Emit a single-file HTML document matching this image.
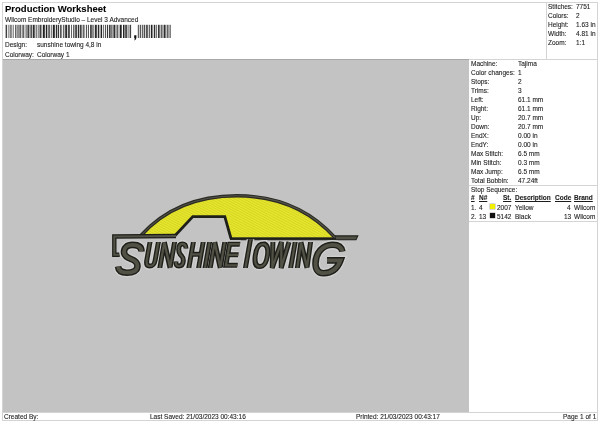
<!DOCTYPE html>
<html><head><meta charset="utf-8"><style>
html,body{margin:0;padding:0;background:#fff;width:600px;height:424px;overflow:hidden;position:relative}
.t{position:absolute;will-change:transform;font-family:"Liberation Sans",sans-serif;font-size:6.5px;color:#1c1c1c;-webkit-text-stroke:0.1px #1c1c1c;white-space:pre;line-height:normal}
.ln{position:absolute;background:#d4d4d4}
</style></head><body>
<div class="ln" style="left:2px;top:2px;width:596px;height:1px"></div>
<div class="ln" style="left:2px;top:2px;width:1px;height:419px"></div>
<div class="ln" style="left:597px;top:2px;width:1px;height:419px"></div>
<div class="ln" style="left:2px;top:420px;width:596px;height:1px"></div>
<div class="ln" style="left:546px;top:2px;width:1px;height:57px"></div>
<div class="ln" style="left:2px;top:59px;width:596px;height:1px"></div>
<div style="position:absolute;left:3px;top:59px;width:466px;height:353px;background:#c3c3c3"></div>
<div style="position:absolute;left:3px;top:59px;width:466px;height:1px;background:#a8a8a8"></div>
<div class="ln" style="left:469px;top:185px;width:129px;height:1px"></div>
<div class="ln" style="left:469px;top:221px;width:129px;height:1px"></div>
<div class="ln" style="left:2px;top:412px;width:596px;height:1px"></div>
<svg style="position:absolute;left:0;top:0" width="600" height="424" viewBox="0 0 600 424">
<g fill="#222"><rect x="5.6" y="24.8" width="1.5" height="13.2" fill-opacity="0.85"/><rect x="8.4" y="24.8" width="1" height="13.2" fill-opacity="0.7"/><rect x="10.2" y="24.8" width="1.5" height="13.2" fill-opacity="0.7"/><rect x="12.7" y="24.8" width="1" height="13.2" fill-opacity="0.7"/><rect x="15.0" y="24.8" width="1.5" height="13.2" fill-opacity="0.7"/><rect x="17.5" y="24.8" width="1" height="13.2" fill-opacity="1.0"/><rect x="19.3" y="24.8" width="2" height="13.2" fill-opacity="0.7"/><rect x="22.3" y="24.8" width="2" height="13.2" fill-opacity="0.7"/><rect x="25.6" y="24.8" width="1" height="13.2" fill-opacity="0.85"/><rect x="27.4" y="24.8" width="2" height="13.2" fill-opacity="0.85"/><rect x="30.4" y="24.8" width="1.5" height="13.2" fill-opacity="0.85"/><rect x="32.7" y="24.8" width="2" height="13.2" fill-opacity="0.95"/><rect x="35.7" y="24.8" width="1" height="13.2" fill-opacity="0.85"/><rect x="37.7" y="24.8" width="1" height="13.2" fill-opacity="0.7"/><rect x="39.5" y="24.8" width="2" height="13.2" fill-opacity="0.85"/><rect x="42.8" y="24.8" width="2" height="13.2" fill-opacity="1.0"/><rect x="45.8" y="24.8" width="1.5" height="13.2" fill-opacity="1.0"/><rect x="48.3" y="24.8" width="1.5" height="13.2" fill-opacity="0.85"/><rect x="50.8" y="24.8" width="1" height="13.2" fill-opacity="0.7"/><rect x="52.8" y="24.8" width="2" height="13.2" fill-opacity="1.0"/><rect x="55.8" y="24.8" width="1.5" height="13.2" fill-opacity="0.95"/><rect x="58.1" y="24.8" width="1" height="13.2" fill-opacity="1.0"/><rect x="60.1" y="24.8" width="1.5" height="13.2" fill-opacity="0.85"/><rect x="62.9" y="24.8" width="1.5" height="13.2" fill-opacity="0.7"/><rect x="65.2" y="24.8" width="2" height="13.2" fill-opacity="0.95"/><rect x="68.2" y="24.8" width="1.5" height="13.2" fill-opacity="1.0"/><rect x="71.0" y="24.8" width="1" height="13.2" fill-opacity="0.7"/><rect x="73.0" y="24.8" width="1.5" height="13.2" fill-opacity="0.7"/><rect x="75.3" y="24.8" width="1.5" height="13.2" fill-opacity="1.0"/><rect x="77.8" y="24.8" width="1.5" height="13.2" fill-opacity="0.95"/><rect x="80.1" y="24.8" width="1.5" height="13.2" fill-opacity="0.95"/><rect x="82.6" y="24.8" width="2" height="13.2" fill-opacity="0.7"/><rect x="85.9" y="24.8" width="1" height="13.2" fill-opacity="0.85"/><rect x="87.9" y="24.8" width="1" height="13.2" fill-opacity="0.85"/><rect x="90.2" y="24.8" width="1.5" height="13.2" fill-opacity="1.0"/><rect x="92.5" y="24.8" width="1" height="13.2" fill-opacity="1.0"/><rect x="94.8" y="24.8" width="2" height="13.2" fill-opacity="0.95"/><rect x="97.8" y="24.8" width="1.5" height="13.2" fill-opacity="0.95"/><rect x="100.6" y="24.8" width="1.5" height="13.2" fill-opacity="1.0"/><rect x="103.1" y="24.8" width="1" height="13.2" fill-opacity="0.7"/><rect x="105.1" y="24.8" width="1" height="13.2" fill-opacity="0.85"/><rect x="107.1" y="24.8" width="1" height="13.2" fill-opacity="1.0"/><rect x="109.1" y="24.8" width="1.5" height="13.2" fill-opacity="0.95"/><rect x="111.4" y="24.8" width="1" height="13.2" fill-opacity="1.0"/><rect x="113.4" y="24.8" width="2" height="13.2" fill-opacity="0.95"/><rect x="116.4" y="24.8" width="2" height="13.2" fill-opacity="0.7"/><rect x="119.7" y="24.8" width="2" height="13.2" fill-opacity="1.0"/><rect x="123.0" y="24.8" width="1.5" height="13.2" fill-opacity="1.0"/><rect x="125.3" y="24.8" width="1.5" height="13.2" fill-opacity="1.0"/><rect x="127.6" y="24.8" width="1" height="13.2" fill-opacity="0.7"/><rect x="129.6" y="24.8" width="1.5" height="13.2" fill-opacity="0.85"/><rect x="137.8" y="24.8" width="1.5" height="13.2" fill-opacity="0.7"/><rect x="140.1" y="24.8" width="1" height="13.2" fill-opacity="0.85"/><rect x="141.9" y="24.8" width="1.5" height="13.2" fill-opacity="0.7"/><rect x="144.2" y="24.8" width="1" height="13.2" fill-opacity="1.0"/><rect x="146.2" y="24.8" width="1.5" height="13.2" fill-opacity="0.95"/><rect x="148.7" y="24.8" width="1.5" height="13.2" fill-opacity="0.7"/><rect x="151.0" y="24.8" width="1.5" height="13.2" fill-opacity="1.0"/><rect x="153.8" y="24.8" width="1.5" height="13.2" fill-opacity="0.95"/><rect x="156.1" y="24.8" width="1" height="13.2" fill-opacity="0.7"/><rect x="158.1" y="24.8" width="1.5" height="13.2" fill-opacity="1.0"/><rect x="160.6" y="24.8" width="2" height="13.2" fill-opacity="0.7"/><rect x="163.6" y="24.8" width="2" height="13.2" fill-opacity="0.95"/><rect x="166.6" y="24.8" width="2" height="13.2" fill-opacity="0.7"/><rect x="169.6" y="24.8" width="1" height="13.2" fill-opacity="0.95"/></g>
<path d="M134.2,35.2 h2.2 v2.4 q0,2.2 -1.8,2.8 l-0.4,-0.7 q0.9,-0.5 1,-1.3 h-1z" fill="#111"/>
<g id="logo"><path d="M230.6,235.9 L357.8,235.9 L356,239.8 L230.6,239.8 Z" fill="#525145" stroke="#1f1f1a" stroke-width="1.1"/><defs><pattern id="st" width="2.2" height="2.2" patternUnits="userSpaceOnUse" patternTransform="rotate(28)"><rect width="2.2" height="2.2" fill="#e6e62e"/><rect y="1.3" width="2.2" height="0.9" fill="#d4d422"/></pattern></defs><path d="M140.5,236 C167,206.5 201,195.8 237,195.8 C273,195.8 307,206.5 335,237.6 L231,237.6 L224.8,216.6 L192.8,216.6 L174.7,235.5 Z" fill="url(#st)"/><path d="M231,238.6 L336,238.6" stroke="#1f1f1a" stroke-width="2"/><path d="M140.5,236 C167,206.5 201,195.8 237,195.8 C273,195.8 307,206.5 335,237.6" fill="none" stroke="#2a2a24" stroke-width="3.5"/><path d="M140.5,236 C167,206.5 201,195.8 237,195.8 C273,195.8 307,206.5 335,237.6" fill="none" stroke="#55544a" stroke-width="1.1"/><path d="M174.7,236 L192.8,216.6 L224.8,216.6 L231,238.5" fill="none" stroke="#1f1f1a" stroke-width="2.8" stroke-linejoin="miter"/><path d="M119.7,254.7 L114.3,254.7 L114.3,236.5 L176,236" fill="none" stroke="#1f1f1a" stroke-width="4.4" stroke-linejoin="miter"/><path d="M119.7,254.7 L114.3,254.7 L114.3,236.5 L176,236" fill="none" stroke="#525145" stroke-width="2" stroke-linejoin="miter"/><g fill="none" stroke-linejoin="miter" stroke-miterlimit="3" stroke-linecap="butt"><g transform="translate(150,242) skewX(-10)"><path d="M0,0 L0,18 C0,22.5 1.5,24 4.2,24 C6.9,24 8.4,22.5 8.4,18 L8.4,0" stroke="#d0d0d0" stroke-width="7.8"/></g><g transform="translate(164.4,242) skewX(-10)"><path d="M0,26 L0,0.5 L10.2,25.5 L10.2,0" stroke="#d0d0d0" stroke-width="7.8"/></g><g><path d="M186,248.5 C186,245 184.8,243.9 182.3,243.9 C179.8,243.9 178.7,246 178.7,249.5 C178.7,252.8 180,254.5 181.6,256 C183,257.3 183.4,259 183.3,261 C183.1,264.5 181.5,266 178.8,266 C176.5,266 175.8,264.5 175.9,261.5" stroke="#d0d0d0" stroke-width="7.8"/></g><g transform="translate(193.4,242) skewX(-10)"><path d="M0,0 L0,26 M9.8,0 L9.8,26 M0,12.3 L9.8,12.3" stroke="#d0d0d0" stroke-width="7.8"/></g><g transform="translate(209.6,242) skewX(-10)"><path d="M0,0 L0,26" stroke="#d0d0d0" stroke-width="7.8"/></g><g transform="translate(214.8,242) skewX(-10)"><path d="M0,26 L0,0.5 L10,25.5 L10,0" stroke="#d0d0d0" stroke-width="7.8"/></g><g transform="translate(230,242) skewX(-10)"><path d="M10.4,2.2 L0,2.2 L0,23.3 L11.6,23.3 M0,12.8 L10.6,12.8" stroke="#d0d0d0" stroke-width="7.8"/></g><g transform="translate(250.5,239.2) skewX(-10)"><path d="M0,0 L0,28.8" stroke="#d0d0d0" stroke-width="7.8"/></g><g transform="translate(261.4,255.3) skewX(-8)"><path d="M0,-11.2 C4,-11.3 6.1,-7 6.1,0 C6.1,7 4,11.3 0,11.3 C-4,11.3 -6.1,7 -6.1,0 C-6.1,-7 -4,-11.3 0,-11.3 Z" stroke="#d0d0d0" stroke-width="7.8"/></g><g><path d="M272.9,242 L272.2,268 L281.4,242 L281.2,268 L289,242" stroke="#d0d0d0" stroke-width="7.8"/></g><g transform="translate(295.2,242) skewX(-10)"><path d="M0,0 L0,26" stroke="#d0d0d0" stroke-width="7.8"/></g><g transform="translate(301,242) skewX(-8)"><path d="M0,26 L0,0.5 L9.6,25.5 L9.6,0" stroke="#d0d0d0" stroke-width="7.8"/></g><g><path d="M141.5,251.5 C141.5,246.5 138,244.9 132.5,244.9 C127,244.9 124,247.8 124,252 C124,256 127,257.5 131,259 C135,260.5 137.5,262.5 137.5,266 C137.5,270.5 133,272.7 127,272.7 C121.5,272.7 118.5,270.5 118,266.5" stroke="#d0d0d0" stroke-width="9.399999999999999"/></g><g><path d="M342.4,251.5 C341.5,246.5 337.5,244.8 332.5,244.8 C322.5,244.8 315.5,253 315.5,263.5 C315.5,270 318.5,273.2 323.5,273.2 C331.5,273.2 337.5,268.5 340.5,260.4 L327,260.4" stroke="#d0d0d0" stroke-width="9.399999999999999"/></g><g transform="translate(150,242) skewX(-10)"><path d="M0,0 L0,18 C0,22.5 1.5,24 4.2,24 C6.9,24 8.4,22.5 8.4,18 L8.4,0" stroke="#1f1f1a" stroke-width="5.0"/><path d="M0,0 L0,18 C0,22.5 1.5,24 4.2,24 C6.9,24 8.4,22.5 8.4,18 L8.4,0" stroke="#525145" stroke-width="2.2"/></g><g transform="translate(164.4,242) skewX(-10)"><path d="M0,26 L0,0.5 L10.2,25.5 L10.2,0" stroke="#1f1f1a" stroke-width="5.0"/><path d="M0,26 L0,0.5 L10.2,25.5 L10.2,0" stroke="#525145" stroke-width="2.2"/></g><g><path d="M186,248.5 C186,245 184.8,243.9 182.3,243.9 C179.8,243.9 178.7,246 178.7,249.5 C178.7,252.8 180,254.5 181.6,256 C183,257.3 183.4,259 183.3,261 C183.1,264.5 181.5,266 178.8,266 C176.5,266 175.8,264.5 175.9,261.5" stroke="#1f1f1a" stroke-width="5.0"/><path d="M186,248.5 C186,245 184.8,243.9 182.3,243.9 C179.8,243.9 178.7,246 178.7,249.5 C178.7,252.8 180,254.5 181.6,256 C183,257.3 183.4,259 183.3,261 C183.1,264.5 181.5,266 178.8,266 C176.5,266 175.8,264.5 175.9,261.5" stroke="#525145" stroke-width="2.2"/></g><g transform="translate(193.4,242) skewX(-10)"><path d="M0,0 L0,26 M9.8,0 L9.8,26 M0,12.3 L9.8,12.3" stroke="#1f1f1a" stroke-width="5.0"/><path d="M0,0 L0,26 M9.8,0 L9.8,26 M0,12.3 L9.8,12.3" stroke="#525145" stroke-width="2.2"/></g><g transform="translate(209.6,242) skewX(-10)"><path d="M0,0 L0,26" stroke="#1f1f1a" stroke-width="5.0"/><path d="M0,0 L0,26" stroke="#525145" stroke-width="2.2"/></g><g transform="translate(214.8,242) skewX(-10)"><path d="M0,26 L0,0.5 L10,25.5 L10,0" stroke="#1f1f1a" stroke-width="5.0"/><path d="M0,26 L0,0.5 L10,25.5 L10,0" stroke="#525145" stroke-width="2.2"/></g><g transform="translate(230,242) skewX(-10)"><path d="M10.4,2.2 L0,2.2 L0,23.3 L11.6,23.3 M0,12.8 L10.6,12.8" stroke="#1f1f1a" stroke-width="5.0"/><path d="M10.4,2.2 L0,2.2 L0,23.3 L11.6,23.3 M0,12.8 L10.6,12.8" stroke="#525145" stroke-width="2.2"/></g><g transform="translate(250.5,239.2) skewX(-10)"><path d="M0,0 L0,28.8" stroke="#1f1f1a" stroke-width="5.0"/><path d="M0,0 L0,28.8" stroke="#525145" stroke-width="2.2"/></g><g transform="translate(261.4,255.3) skewX(-8)"><path d="M0,-11.2 C4,-11.3 6.1,-7 6.1,0 C6.1,7 4,11.3 0,11.3 C-4,11.3 -6.1,7 -6.1,0 C-6.1,-7 -4,-11.3 0,-11.3 Z" stroke="#1f1f1a" stroke-width="5"/><path d="M0,-11.2 C4,-11.3 6.1,-7 6.1,0 C6.1,7 4,11.3 0,11.3 C-4,11.3 -6.1,7 -6.1,0 C-6.1,-7 -4,-11.3 0,-11.3 Z" stroke="#525145" stroke-width="2.2"/></g><g><path d="M272.9,242 L272.2,268 L281.4,242 L281.2,268 L289,242" stroke="#1f1f1a" stroke-width="5.0"/><path d="M272.9,242 L272.2,268 L281.4,242 L281.2,268 L289,242" stroke="#525145" stroke-width="2.2"/></g><g transform="translate(295.2,242) skewX(-10)"><path d="M0,0 L0,26" stroke="#1f1f1a" stroke-width="5.0"/><path d="M0,0 L0,26" stroke="#525145" stroke-width="2.2"/></g><g transform="translate(301,242) skewX(-8)"><path d="M0,26 L0,0.5 L9.6,25.5 L9.6,0" stroke="#1f1f1a" stroke-width="5.0"/><path d="M0,26 L0,0.5 L9.6,25.5 L9.6,0" stroke="#525145" stroke-width="2.2"/></g><g><path d="M141.5,251.5 C141.5,246.5 138,244.9 132.5,244.9 C127,244.9 124,247.8 124,252 C124,256 127,257.5 131,259 C135,260.5 137.5,262.5 137.5,266 C137.5,270.5 133,272.7 127,272.7 C121.5,272.7 118.5,270.5 118,266.5" stroke="#1f1f1a" stroke-width="6.6"/><path d="M141.5,251.5 C141.5,246.5 138,244.9 132.5,244.9 C127,244.9 124,247.8 124,252 C124,256 127,257.5 131,259 C135,260.5 137.5,262.5 137.5,266 C137.5,270.5 133,272.7 127,272.7 C121.5,272.7 118.5,270.5 118,266.5" stroke="#525145" stroke-width="3.8"/></g><g><path d="M342.4,251.5 C341.5,246.5 337.5,244.8 332.5,244.8 C322.5,244.8 315.5,253 315.5,263.5 C315.5,270 318.5,273.2 323.5,273.2 C331.5,273.2 337.5,268.5 340.5,260.4 L327,260.4" stroke="#1f1f1a" stroke-width="6.6"/><path d="M342.4,251.5 C341.5,246.5 337.5,244.8 332.5,244.8 C322.5,244.8 315.5,253 315.5,263.5 C315.5,270 318.5,273.2 323.5,273.2 C331.5,273.2 337.5,268.5 340.5,260.4 L327,260.4" stroke="#525145" stroke-width="3.8"/></g></g></g>
</svg>
<div class="t" style="left:5px;top:3.10px;font-size:9.5px;font-weight:bold;color:#000">Production Worksheet</div><div class="t" style="left:5px;top:15.72px;">Wilcom EmbroideryStudio – Level 3 Advanced</div><div class="t" style="left:5px;top:41.12px;">Design:</div><div class="t" style="left:37px;top:41.12px;">sunshine towing 4,8 in</div><div class="t" style="left:5px;top:50.62px;">Colorway:</div><div class="t" style="left:37px;top:50.62px;">Colorway 1</div><div class="t" style="left:548px;top:2.62px;">Stitches:</div><div class="t" style="left:576px;top:2.62px;">7751</div><div class="t" style="left:548px;top:11.62px;">Colors:</div><div class="t" style="left:576px;top:11.62px;">2</div><div class="t" style="left:548px;top:20.62px;">Height:</div><div class="t" style="left:576px;top:20.62px;">1.63 in</div><div class="t" style="left:548px;top:29.62px;">Width:</div><div class="t" style="left:576px;top:29.62px;">4.81 in</div><div class="t" style="left:548px;top:38.62px;">Zoom:</div><div class="t" style="left:576px;top:38.62px;">1:1</div><div class="t" style="left:471px;top:59.62px;">Machine:</div><div class="t" style="left:518px;top:59.62px;">Tajima</div><div class="t" style="left:471px;top:68.62px;">Color changes:</div><div class="t" style="left:518px;top:68.62px;">1</div><div class="t" style="left:471px;top:77.62px;">Stops:</div><div class="t" style="left:518px;top:77.62px;">2</div><div class="t" style="left:471px;top:86.62px;">Trims:</div><div class="t" style="left:518px;top:86.62px;">3</div><div class="t" style="left:471px;top:95.62px;">Left:</div><div class="t" style="left:518px;top:95.62px;">61.1 mm</div><div class="t" style="left:471px;top:104.62px;">Right:</div><div class="t" style="left:518px;top:104.62px;">61.1 mm</div><div class="t" style="left:471px;top:113.62px;">Up:</div><div class="t" style="left:518px;top:113.62px;">20.7 mm</div><div class="t" style="left:471px;top:122.62px;">Down:</div><div class="t" style="left:518px;top:122.62px;">20.7 mm</div><div class="t" style="left:471px;top:131.62px;">EndX:</div><div class="t" style="left:518px;top:131.62px;">0.00 in</div><div class="t" style="left:471px;top:140.62px;">EndY:</div><div class="t" style="left:518px;top:140.62px;">0.00 in</div><div class="t" style="left:471px;top:149.62px;">Max Stitch:</div><div class="t" style="left:518px;top:149.62px;">6.5 mm</div><div class="t" style="left:471px;top:158.62px;">Min Stitch:</div><div class="t" style="left:518px;top:158.62px;">0.3 mm</div><div class="t" style="left:471px;top:167.62px;">Max Jump:</div><div class="t" style="left:518px;top:167.62px;">6.5 mm</div><div class="t" style="left:471px;top:176.62px;">Total Bobbin:</div><div class="t" style="left:518px;top:176.62px;">47.24ft</div><div class="t" style="left:471px;top:186.12px;">Stop Sequence:</div><div class="t" style="left:471px;top:194.32px;font-weight:bold;text-decoration:underline;">#</div><div class="t" style="left:479px;top:194.32px;font-weight:bold;text-decoration:underline;">N#</div><div class="t" style="right:88.5px;top:194.32px;font-weight:bold;text-decoration:underline;">St.</div><div class="t" style="left:515px;top:194.32px;font-weight:bold;text-decoration:underline;">Description</div><div class="t" style="right:29px;top:194.32px;font-weight:bold;text-decoration:underline;">Code</div><div class="t" style="left:574px;top:194.32px;font-weight:bold;text-decoration:underline;">Brand</div><div class="t" style="left:471px;top:203.92px;">1.</div><div class="t" style="left:479px;top:203.92px;">4</div><div style="position:absolute;left:489.6px;top:203.8px;width:5.4px;height:5.2px;background:#f0f000;box-shadow:0 0 0 0.4px #999"></div><div class="t" style="right:88.5px;top:203.92px;">2007</div><div class="t" style="left:515px;top:203.92px;">Yellow</div><div class="t" style="right:29px;top:203.92px;">4</div><div class="t" style="left:574px;top:203.92px;">Wilcom</div><div class="t" style="left:471px;top:213.02px;">2.</div><div class="t" style="left:479px;top:213.02px;">13</div><div style="position:absolute;left:489.6px;top:212.7px;width:5.4px;height:5.2px;background:#111;box-shadow:0 0 0 0.4px #999"></div><div class="t" style="right:88.5px;top:213.02px;">5142</div><div class="t" style="left:515px;top:213.02px;">Black</div><div class="t" style="right:29px;top:213.02px;">13</div><div class="t" style="left:574px;top:213.02px;">Wilcom</div><div class="t" style="left:4px;top:413.12px;">Created By:</div><div class="t" style="left:149.6px;top:413.12px;">Last Saved: 21/03/2023 00:43:16</div><div class="t" style="left:356px;top:413.12px;">Printed: 21/03/2023 00:43:17</div><div class="t" style="right:3.7999999999999545px;top:413.12px;">Page 1 of 1</div>
</body></html>
